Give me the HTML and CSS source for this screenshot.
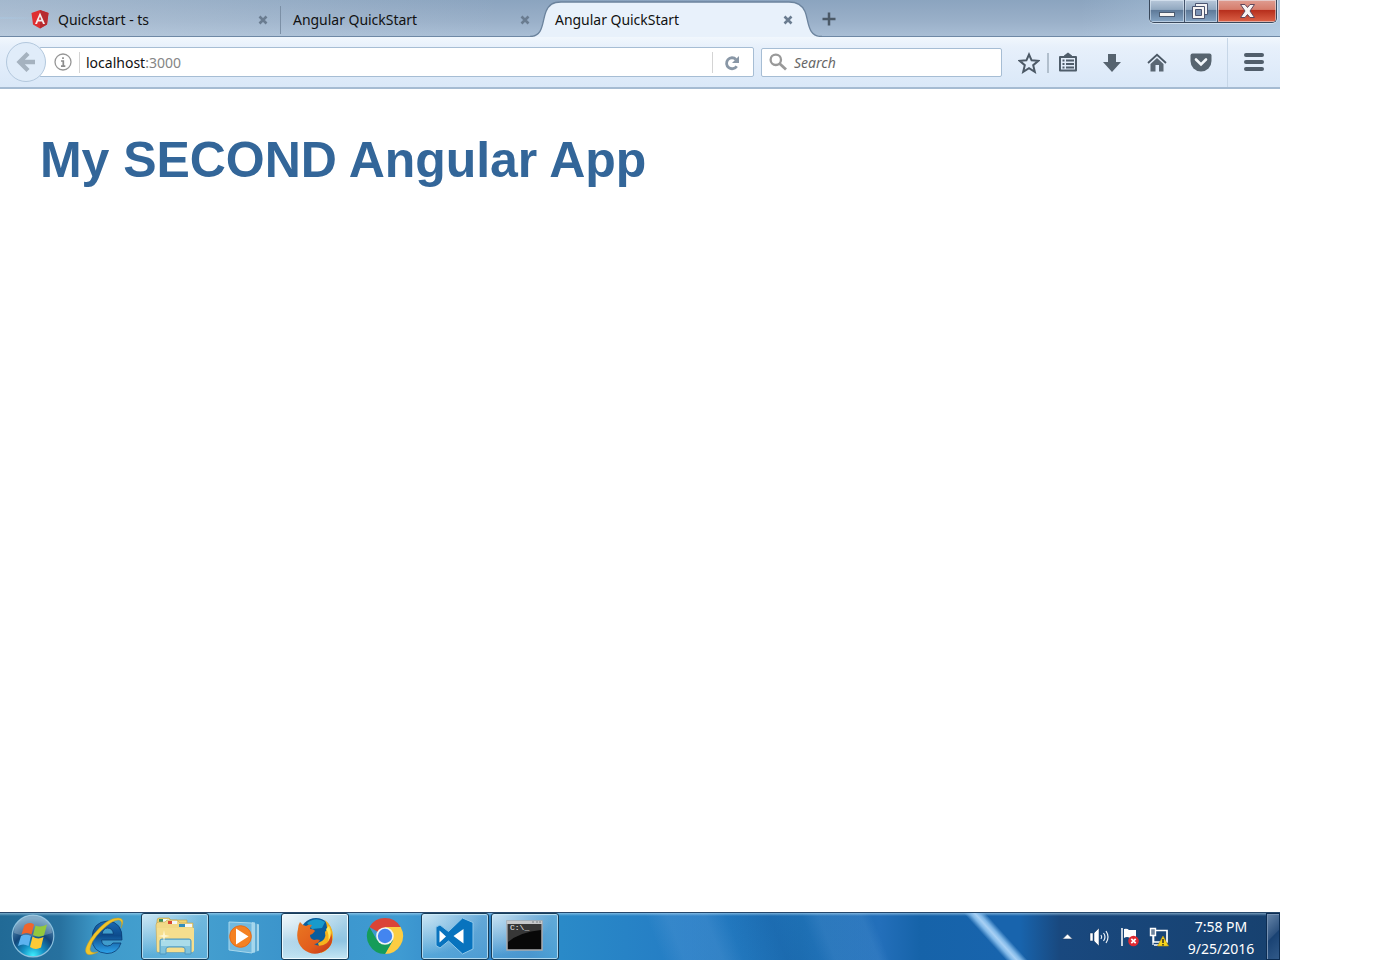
FILE: index.html
```html
<!DOCTYPE html>
<html lang="en">
<head>
<meta charset="utf-8">
<title>Angular QuickStart</title>
<link rel="stylesheet" href="styles.css">
</head>
<body>
<div class="desktop">
  <header class="tabstrip">
    <div class="tab tab-first">
      <svg class="favicon" width="18" height="19" viewBox="0 0 18 19"><path d="M9 0L17.500 3L16 14.500L9 18.500L2 14.500L.5 3Z" fill="#df2e31"/><path d="M9 0L17.500 3L16 14.500L9 18.500Z" fill="#b72b2f"/><path d="M9 2.500L14 14h-2l-1-2.600H7L6 14H4ZM9 6.500L7.700 9.700h2.600Z" fill="#f3eeee" fill-rule="evenodd"/></svg>
      <span class="tab-label">Quickstart - ts</span>
      <svg class="close" width="10" height="10" viewBox="0 0 10 10"><path d="M1.500 1.500L8.500 8.500M8.500 1.500L1.500 8.500"/></svg>
    </div>
    <div class="tab tab-second">
      <span class="tab-label">Angular QuickStart</span>
      <svg class="close" width="10" height="10" viewBox="0 0 10 10"><path d="M1.500 1.500L8.500 8.500M8.500 1.500L1.500 8.500"/></svg>
    </div>
    <div class="tab tab-active">
      <svg class="tab-shape" width="292" height="37" viewBox="0 0 292 37"><path d="M0 37V36.500C14 36.500 12 21 16 11.500C19 4.500 23 2 31 2H259C267 2 272 4.500 275 11.500C279 21 277 36.500 292 36.500V37Z" fill="#e8f1fb"/><path d="M0 36.500C14 36.500 12 21 16 11.500C19 4.500 23 2 31 2H259C267 2 272 4.500 275 11.500C279 21 277 36.500 292 36.500" fill="none" stroke="#6b839d" stroke-width="1.300"/></svg>
      <span class="tab-label">Angular QuickStart</span>
      <svg class="close" width="10" height="10" viewBox="0 0 10 10"><path d="M1.500 1.500L8.500 8.500M8.500 1.500L1.500 8.500"/></svg>
    </div>
    <svg class="newtab" width="14" height="14" viewBox="0 0 14 14"><path d="M7 .5V13.500M.5 7H13.500" stroke="#4b5967" stroke-width="2.500"/></svg>
    <div class="winctl">
      <div class="wc wc-min"><svg width="18" height="8" viewBox="0 0 18 8"><rect x="1.500" y="1.500" width="15" height="4" fill="#f7f5f2" stroke="#4b5b70"/></svg></div>
      <div class="wc wc-max"><svg width="20" height="19" viewBox="0 0 20 19"><path d="M5.500 1.500h12v11h-12z" fill="#f3f3f4" stroke="#4b5570"/><path d="M2.500 4.500h12v12h-12z" fill="#f7f5f4" stroke="#4b5570"/><path d="M5.500 7.500h6v6h-6z" fill="#7b93b5" stroke="#4b5570"/></svg></div>
      <div class="wc wc-close"><svg width="17" height="16" viewBox="0 0 17 16"><path d="M1.500 1.500h4.500l2.500 3 2.500-3h4.500L11 8l4.500 6.500H11l-2.500-3-2.500 3H1.500L6 8Z" fill="#f7f4f3" stroke="#60465a"/></svg></div>
    </div>
  </header>

  <nav class="toolbar">
    <div class="back"><svg width="20" height="20" viewBox="0 0 20 20"><path d="M12 1.500L3.500 10L12 18.500M4 10H19" fill="none" stroke="#a5b2bf" stroke-width="4.300"/></svg></div>
    <div class="urlbar">
      <svg class="info" width="18" height="18" viewBox="0 0 18 18"><circle cx="9" cy="9" r="8" fill="none" stroke="#969696" stroke-width="1.300"/><path d="M9 4.200v1.900M7 8h2.300v5M7 13.200h4.300" stroke="#8c8c8c" stroke-width="1.700" fill="none"/></svg>
      <span class="rule"></span>
      <span class="url">localhost<span class="port">:3000</span></span>
      <span class="rule rule-end"></span>
      <svg class="reload" width="16" height="16" viewBox="0 0 16 16"><path d="M12.700 11.200A5.500 5.500 0 1 1 12 4.400" fill="none" stroke="#8997a6" stroke-width="2.800"/><path d="M15 1V8H8Z" fill="#8997a6"/></svg>
    </div>
    <div class="search">
      <svg width="18" height="18" viewBox="0 0 18 18"><circle cx="6.800" cy="6.800" r="5.200" fill="none" stroke="#999" stroke-width="2.300"/><path d="M10.500 10.500L17 16.500" stroke="#999" stroke-width="2.800"/></svg>
      <span class="placeholder">Search</span>
    </div>
    <div class="tools">
      <svg class="star" width="22" height="22" viewBox="0 0 22 22"><path d="M11 2.500L13.600 8.300L20.300 8.800L15.200 13.200L16.800 19.800L11 16.200L5.200 19.800L6.800 13.200L1.700 8.800L8.400 8.300Z" fill="none" stroke="#4c5966" stroke-width="2"/></svg>
      <span class="divider"></span>
      <svg class="clip" width="20" height="20" viewBox="0 0 20 20"><path d="M2 5h16v13.500H2Z" fill="none" stroke="#4f5d6a" stroke-width="2" stroke-linejoin="round"/><path d="M6 3.500L10 .5l4 3V6H6Z" fill="#4f5d6a"/><path d="M4.500 8.500h2M8 8.500h8M4.500 12h2M8 12h8M4.500 15.500h2M8 15.500h8" stroke="#4f5d6a" stroke-width="1.800"/></svg>
      <svg class="down" width="18" height="18" viewBox="0 0 18 18"><path d="M5 0h8v8h5L9 18L0 8H5Z" fill="#56636f"/></svg>
      <svg class="home" width="20" height="19" viewBox="0 0 20 19"><path d="M1 10L10 1.800L19 10" fill="none" stroke="#4b5865" stroke-width="1.800"/><path d="M3.500 11L10 5L16.500 11V18.500H12V12H8.500V18.500H3.500Z" fill="#5a6773"/></svg>
      <svg class="pocket" width="22" height="19" viewBox="0 0 22 19"><path d="M2.500.5h17q2 0 2 2v5.500a10.500 10.500 0 0 1-21 0V2.500q0-2 2-2Z" fill="#57646f"/><path d="M6 6.500L11 11.500L16 6.500" fill="none" stroke="#f3f7fb" stroke-width="2.600" stroke-linecap="round"/></svg>
    </div>
    <div class="menu"><i></i><i></i><i></i></div>
  </nav>

  <main class="page"><h1>My SECOND Angular App</h1></main>

  <footer class="taskbar">
    <div class="start"><svg width="44" height="44" viewBox="0 0 44 44">
      <defs><radialGradient id="orb" cx=".5" cy=".98" r=".9"><stop offset="0" stop-color="#3ff0ff"/><stop offset=".3" stop-color="#1490c4"/><stop offset=".6" stop-color="#12467a"/><stop offset="1" stop-color="#5f95ba"/></radialGradient></defs>
      <circle cx="22" cy="22" r="20.800" fill="url(#orb)" stroke="#8cc0dd" stroke-width="1.200"/><path d="M3 19A19 18 0 0 1 41 19Q21 26 3 19Z" fill="#fff" opacity=".22"/>
      <path d="M13.500 11Q18.500 7.500 23 10.500L20.500 20.500Q15.500 17.500 10.500 20.500Z" fill="#f0652b"/><path d="M24.500 11.500Q29.500 14 36 10.500L33 21.500Q27.500 24 22 21Z" fill="#93c83e"/><path d="M10 22Q15 19.500 20 22L17.500 32Q12 29 7 32Z" fill="#5db3f0"/><path d="M21.500 22.500Q27 26 32.500 23L30 33.500Q24.500 36.500 19 33Z" fill="#fcca36"/></svg></div>
    <div class="task plain ie"><svg width="42" height="40" viewBox="0 0 42 40">
      <defs><linearGradient id="ie" x1="0" y1="0" x2="0" y2="1"><stop offset="0" stop-color="#1a6ab5"/><stop offset=".45" stop-color="#0d4b8c"/><stop offset="1" stop-color="#2fa6ee"/></linearGradient></defs>
      <path d="M38 24H17.500Q18 30 23.500 30Q27 30 29 27H37Q33.500 37.500 23 37.500Q8 36.500 8 22Q8.500 6 23.500 5Q39 6 38 24ZM18 18H29.500Q28.500 12 23.500 12Q19 12.500 18 18Z" fill="url(#ie)" stroke="#0a3c74" stroke-width=".8"/>
      <path d="M37 12Q42 2 34 2Q23 2 10 18Q-2 34 3 38Q6 40 14 36Q6 38 6 33Q7 25 17 15Q29 3 35 4Q39 5 37 12Z" fill="#f2c529" stroke="#bd9928" stroke-width=".5"/></svg></div>
    <div class="task"><svg width="42" height="40" viewBox="0 0 42 40">
      <path d="M3 5Q3 2 5 2H15L17 4H33V12H3Z" fill="#efd371" stroke="#b99a45" stroke-width=".6"/><path d="M5 3h5v3H5z" fill="#3b8e59"/><path d="M9 3h6v3H9z" fill="#f8faf6"/>
      <path d="M2 9Q2 6 5 6H11L13 4H23L26 7H39V36H3Z" fill="#f1d987" stroke="#c2a455" stroke-width=".6"/><path d="M14 5h5v3h-5z" fill="#d94831"/><path d="M18 5h5v3h-5z" fill="#f4f7f8"/><path d="M25 8h13v3H25z" fill="#f4f8f8"/><path d="M25 8h6v3h-6z" fill="#338db9"/>
      <path d="M3 12H40V34Q40 36 37 36H6Q3 36 3 34Z" fill="#f5de8e"/><path d="M6 38V25Q6 23 8 23H35Q37 23 37 25V38H31V33Q31 31 28 31H15Q12 31 12 33V38Z" fill="#7fc2dc" stroke="#4f98c0"/><path d="M7 24h29v6H7z" fill="#b5e2ec" opacity=".8"/><path d="M10 14L11 19L16 20L11 21L10 26L9 21L4 20L9 19Z" fill="#fffbe2" opacity=".8"/></svg></div>
    <div class="task plain wmp"><svg width="36" height="36" viewBox="0 0 36 36">
      <path d="M25 4l7 1v27l-8 2z" fill="#62acd3"/><path d="M25 3l3 .5v30l-3 .5zM30 5l2 .5v26l-2 .5z" fill="#a5d6ec"/><path d="M2 3L25 4V34L2 31Z" fill="#72b9de" stroke="#a9d9ed"/><circle cx="13.500" cy="17.500" r="10.800" fill="#f48122" stroke="#e66b18"/><path d="M9 9.500L21.500 17.500L9 25.500Z" fill="#fff"/></svg></div>
    <div class="task current"><svg width="38" height="38" viewBox="0 0 38 38">
      <defs><linearGradient id="fox" x1="0" y1="0" x2="1" y2="1"><stop offset="0" stop-color="#e97822"/><stop offset=".6" stop-color="#e25c1c"/><stop offset="1" stop-color="#bd321c"/></linearGradient></defs>
      <circle cx="20" cy="17" r="16" fill="#095d9d"/><path d="M11 6Q20-1 29 5L26 11L16 12Z" fill="#189acb"/><path d="M29 3Q37 9 37 20Q36 32 25 36L22 26Q31 23 29 15Q33 12 29 3Z" fill="#f6b31c"/><path d="M33 9Q37 18 32 27Q34 17 30 12Z" fill="#ffe657"/><path d="M4 5Q6 8 10 9Q13 7 16 8Q14 10 14 12Q18 12 19 14Q17 17 14 18Q14 22 18 23Q21 22 24 23Q22 27 18 27Q24 31 31 26Q35 21 35 16Q39 27 30 33Q18 41 7 32Q-1 24 2 12Q2 8 4 5Z" fill="url(#fox)"/></svg></div>
    <div class="task plain chrome"><svg width="38" height="38" viewBox="0 0 38 38"><path d="M19 19L3.400 10A18 18 0 0 1 34.600 10Z" fill="#db4437"/><path d="M34.600 10A18 18 0 0 1 19 37L26.800 23.500L19 10Z" fill="#fccd42"/><path d="M3.400 10A18 18 0 0 0 19 37L26.800 23.500L11.200 23.500Z" fill="#159c59"/><path d="M19 10H34.600L26.800 23.500Z" fill="#fccd42"/><circle cx="19" cy="19" r="8.800" fill="#f2f5f4"/><circle cx="19" cy="19" r="7.200" fill="#4385f0"/></svg></div>
    <div class="task code"><svg width="40" height="38" viewBox="0 0 40 38"><path d="M27.500 1L38 5.500V32L27.500 37L13.500 24L5 31L1 28.500V10L5 8L13.500 14.500Z" fill="#0873be" stroke="#8fc8ea"/><path d="M28.500 12L18.500 19L28.500 26.500ZM4.500 13.500V25.500L11 19.500Z" fill="#fff"/></svg></div>
    <div class="task terminal"><svg width="38" height="32" viewBox="0 0 38 32"><path d="M1 1h35v29H1z" fill="#080808" stroke="#a9abad" stroke-width="1.500"/><path d="M2 4h33v6Q14 12 2 22Z" fill="#373737"/><path d="M1 1h35v3H1z" fill="#c6c8ca"/><path d="M26 2h2M30 2h2M33 2h2" stroke="#7d8287"/></svg><span class="prompt">C:\_</span></div>
    <div class="tray">
      <svg class="caret" width="11" height="7" viewBox="0 0 11 7"><path d="M5.500 1L10.500 6H.5Z" fill="#fff" stroke="#203c65" stroke-width=".6"/></svg>
      <svg class="sound" width="22" height="22" viewBox="0 0 22 22"><path d="M1 7H4V15H1ZM5 7L10 2V20L5 15Z" fill="#fff" stroke="#17365d" stroke-width=".5"/><path d="M12 9Q13.500 11 12 13M14.500 7Q17.500 11 14.500 15M17 5Q21 11 17 17" fill="none" stroke="#edf4fa" stroke-width="1.200"/></svg>
      <svg class="flag" width="20" height="20" viewBox="0 0 20 20"><path d="M2 1V19" stroke="#fff" stroke-width="1.500"/><path d="M4 2Q7 1 9 3H16V11H10Q7 9 4 11Z" fill="#fff"/><circle cx="13.500" cy="14" r="5.300" fill="#df2a32"/><path d="M11.300 11.800L15.700 16.200M15.700 11.800L11.300 16.200" stroke="#fff" stroke-width="1.700"/></svg>
      <svg class="network" width="20" height="20" viewBox="0 0 20 20"><path d="M6 3.500H18V15H4.500V8M5 18H13" fill="none" stroke="#fff" stroke-width="1.700"/><path d="M1.500 1.500h5v7h-5z" fill="#71869f" stroke="#fff" stroke-width="1.400"/><path d="M4 9v9" stroke="#fff" stroke-width="1.200"/><path d="M14 9L19.500 19H8.500Z" fill="#f6d41b" stroke="#bf9711" stroke-width=".6"/><path d="M14 12v4M14 17v1.500" stroke="#222" stroke-width="1.400"/></svg>
      <div class="clock"><span>7:58 PM</span><span>9/25/2016</span></div>
      <div class="showdesk"></div>
    </div>
  </footer>
</div>
</body>
</html>
```
FILE: styles.css
```css
* { box-sizing: border-box; }
html, body { margin: 0; background: #fff; }
body { font-family: "Noto Sans", sans-serif; font-size: 14px; color: #111; }
svg { display: block; flex: none; }
.desktop { width: 1280px; height: 960px; display: flex; flex-direction: column; overflow: hidden; }

.tabstrip { height: 37px; flex: none; display: flex; align-items: center; border-bottom: 1px solid #6e88a5;
  background: radial-gradient(ellipse at 0 50%, #a9cdea 0, transparent 50px), linear-gradient(90deg, transparent 1080px, rgba(190,216,239,.6)), linear-gradient(90deg, rgba(210,222,233,.35), transparent 500px), linear-gradient(#8ba4bf, #9ab0c9 60%, #a9bed5); }
.tab { position: relative; height: 37px; display: flex; align-items: center; justify-content: space-between; flex: none; padding-top: 3px; }
.tab-first { width: 281px; padding-left: 31px; padding-right: 13px; }
.tab-first::after { content: ""; position: absolute; right: 0; top: 6px; height: 28px; width: 1px; background: #7c90a6; }
.tab-second { width: 249px; padding-left: 12px; }
.tab-active { width: 292px; padding-left: 25px; padding-right: 29px; }
.tab-second .close { margin-left: auto; }
.tab-shape { position: absolute; left: 0; top: 0; }
.tab-label { position: relative; white-space: nowrap; line-height: 20px; letter-spacing: -.03px; font-size: 14px; }
.favicon { margin-right: 9px; }
.tab-first .tab-label { flex: 1; }
.close { position: relative; fill: none; stroke: #6a7c90; stroke-width: 2.600; }
.newtab { margin-top: 2px; }
.winctl { margin-left: auto; margin-right: 3px; align-self: flex-start; width: 128px; height: 23px; display: flex; border: 1px solid #39485b; border-top: 0; border-radius: 0 0 5px 5px; overflow: hidden; box-shadow: 0 1px 0 #d3e1ee, 1px 0 0 #d3e1ee; }
.wc { display: flex; align-items: center; justify-content: center; background: linear-gradient(#b8c8da, #91a8c0 43%, #5d7998 46%, #86a5c4); box-shadow: inset 0 0 0 1px rgba(235,245,255,.5); }
.wc-min { width: 35px; border-right: 1px solid #43536b; padding-top: 7px; }
.wc-max { width: 33px; border-right: 1px solid #43536b; padding-right: 2px; }
.wc-close { flex: 1; background: linear-gradient(#df9d91, #d67d6c 43%, #b62e1c 46%, #dc6247); }

.toolbar { height: 52px; flex: none; display: flex; align-items: center; background: linear-gradient(#f1f7fd, #e7f0fb 20%, #dae8f8); border-bottom: 2px solid #a5bbd2; padding-left: 6px; }
.back { width: 40px; height: 40px; flex: none; display: flex; align-items: center; justify-content: center; border: 1px solid #b3c8dd; border-radius: 50%; background: #e0ecf9; z-index: 1; }
.urlbar { margin-left: -7px; width: 715px; height: 30px; display: flex; align-items: center; background: #fff; border: 1px solid #a6bdd4; border-radius: 2px; padding-left: 14px; }
.rule { width: 1px; height: 21px; background: #d4d4d4; margin: 0 6px 0 7px; }
.url { line-height: 20px; letter-spacing: 0; padding-top: 2px; }
.port { color: #858585; }
.rule-end { margin-left: auto; margin-right: 11px; }
.reload { margin-right: 13px; margin-top: 1px; }
.search { margin-left: 7px; width: 241px; height: 29px; display: flex; align-items: center; gap: 7px; padding-left: 7px; background: #fff; border: 1px solid #a6bdd4; border-radius: 2px; }
.placeholder { font-style: italic; color: #686868; font-size: 14px; letter-spacing: 0; }
.tools { display: flex; align-items: center; margin-left: 15px; padding-top: 1px; }
.star { margin-left: 1px; }
.divider { width: 2px; height: 20px; background: #b1bfcd; margin: 0 9px 0 7px; }
.clip { margin-top: -1px; }
.down { margin-left: 25px; }
.home { margin-left: 26px; }
.pocket { margin-left: 23px; }
.menu { margin-left: 15px; height: 49px; border-left: 1px solid #c6d6e7; padding-left: 16px; display: flex; flex-direction: column; justify-content: center; gap: 3px; }
.menu i { display: block; width: 20px; height: 4px; border-radius: 2px; background: #515e6b; }

.page { flex: 1; background: #fff; padding: 42px 40px; }
h1 { margin: 0; font: bold 50px/58px "Liberation Sans", Arial, sans-serif; letter-spacing: -.06px; color: #369; white-space: nowrap; }

.taskbar { position: relative; height: 48px; flex: none; display: flex; border-top: 1px solid #27486b; overflow: hidden;
  background:
    linear-gradient(rgba(190,225,245,.55) 0, transparent 3px),
    linear-gradient(90deg, transparent 1020px, rgba(25,66,116,.82) 1060px, #17416f),
    linear-gradient(68deg, transparent 615px, rgba(90,155,215,.3) 635px 670px, transparent 690px, rgba(15,80,150,.2) 730px, transparent 760px, rgba(90,155,215,.22) 775px 815px, transparent 825px),
    linear-gradient(90deg, #216a96 0, #27719f 60px, #3f9bcb 100px, #46a1d0 180px, #3b94cb 290px, #3f9bd2 400px, #3288c9 460px, #2477bd 530px, #2a8ac8 560px, #247cc4 690px, #1e70b4 800px, #236fba 880px, #1663a9 920px, #1864ad 1000px); }
.taskbar::before { content: ""; position: absolute; left: 985px; top: 0; width: 22px; height: 48px; transform: skewX(42deg); background: linear-gradient(90deg, transparent, #80b8e8 30%, #a9d1f5 50%, #80b8e8 70%, transparent); }
.start { width: 66px; margin-right: 5px; padding-left: 11px; padding-top: 1px; flex: none; }
.task { width: 68px; height: 47px; margin-right: 2px; flex: none; display: flex; align-items: center; justify-content: center; border: 1px solid #173d59; border-radius: 3px; background: radial-gradient(ellipse at 0 0, rgba(235,247,252,.75), transparent 65%), linear-gradient(rgba(185,225,243,.4), rgba(125,195,232,.4)); box-shadow: inset 0 0 0 1px rgba(205,235,248,.75); position: relative; padding-bottom: 2px; }
.task.plain { background: none; border-color: transparent; box-shadow: none; }
.task.wmp { padding: 0; }
.task.current { background: radial-gradient(ellipse at 0 0, #f0f7fa, transparent 70%), linear-gradient(#b0d6ea, #8fc4e2 60%, #c5e6f4); box-shadow: inset 0 0 0 1px #eefaff; }
.prompt { position: absolute; left: 18px; top: 9px; color: #f2f2f2; font: 8px/10px "Liberation Mono", monospace; }
.tray { margin-left: auto; display: flex; align-items: center; }
.caret { margin-right: 16px; }
.sound { margin-right: 9px; }
.flag { margin-right: 9px; }
.network { margin-right: 18px; }
.clock { width: 68px; color: #fff; text-align: center; line-height: 22px; display: flex; flex-direction: column; padding-top: 2px; margin-right: 11px; letter-spacing: 0; white-space: nowrap; }
.showdesk { width: 14px; height: 47px; border: 1px solid #0c2d53; box-shadow: inset 1px 1px 0 #7692b3; background: linear-gradient(135deg, #6887aa, #2d527f 48%, #194273 50%, #315a89); }
```
